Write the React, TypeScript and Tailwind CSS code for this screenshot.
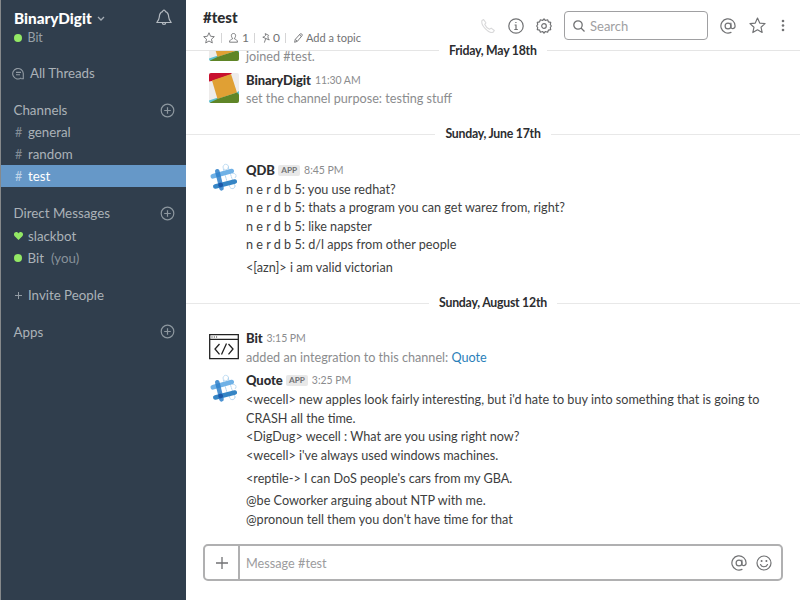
import React from 'react';

const PlusCircle = () => (
  <svg className="h-[15px] w-[15px]" viewBox="0 0 15 15" fill="none" stroke="#8d979f" strokeWidth="1.2">
    <circle cx="7.5" cy="7.5" r="6.3" />
    <path d="M7.5 4.2v6.6M4.2 7.5h6.6" />
  </svg>
);

const SectionTitle = ({ label }: { label: string }) => (
  <div className="flex h-[22px] items-center justify-between pl-[12.500px] pr-[11px]">
    <span className="pt-px text-[13.350px]">{label}</span>
    <PlusCircle />
  </div>
);

const Channel = ({ name, active }: { name: string; active?: boolean }) => (
  <div
    className={
      active
        ? 'flex h-[22px] items-center bg-[#6698c8] pl-[14px] pt-[2px] text-white'
        : 'flex h-[22px] items-center pl-[14px] pt-[2px]'
    }
  >
    <span className={active ? 'w-[13px] text-[12.500px] text-[#c0d5e9]' : 'w-[13px] text-[12.500px] text-[#838d96]'}>#</span>
    <span>{name}</span>
  </div>
);

const Sidebar = () => (
  <aside className="flex h-[600px] w-[186px] shrink-0 flex-col border-l border-[#86898b] bg-[#303e4d] text-[13.3px] text-[#abb2b8]">
    <div className="flex h-[28px] items-end justify-between pl-[13px] pr-[14px]">
      <div className="flex h-[20px] items-center">
        <span className="text-[15.3px] font-black text-white">BinaryDigit</span>
        <svg className="ml-[5px] mt-[1px] h-[6px] w-[8px]" viewBox="0 0 8 6" fill="none" stroke="#a4acb4" strokeWidth="1.3">
          <path d="M1 1l3 3 3-3" />
        </svg>
      </div>
      <svg className="mb-[1px] h-[18px] w-[16px]" viewBox="0 0 16 18" fill="none" stroke="#b3bac0" strokeWidth="1.2" strokeLinejoin="round" strokeLinecap="round">
        <path d="M6.6 2.6a1.4 1.4 0 1 1 2.8 0C12 3.4 12.6 5.6 12.7 8c.1 2.500 .9 3.500 2.500 5.500H.8C2.400 11.500 3.200 10.500 3.300 8c.1-2.400.7-4.600 3.300-5.400zM6.300 13.700a1.700 1.700 0 0 0 3.400 0" />
      </svg>
    </div>
    <div className="flex h-[20px] items-center pl-[13px] text-[12.4px] text-[#98a1a9]">
      <span className="mr-[5.500px] h-[8px] w-[8px] rounded-full bg-[#93e865]" />
      Bit
    </div>
    <div className="mt-[14px] flex h-[22px] items-center pl-[11px]">
      <svg className="mr-[5px] h-[13px] w-[13px]" viewBox="0 0 13 13" fill="none" stroke="#929ba3" strokeWidth="1.1">
        <path d="M9.300 10.900a5.300 5.300 0 1 1 2-4.400v5.300H9.300M4 5.400h5M4 7.800h4" />
      </svg>
      <span className="pt-[2px]">All Threads</span>
    </div>
    <div className="mt-[15px]">
      <SectionTitle label="Channels" />
      <Channel name="general" />
      <Channel name="random" />
      <Channel name="test" active />
    </div>
    <div className="mt-[15px]">
      <SectionTitle label="Direct Messages" />
      <div className="mt-[1px] flex h-[22px] items-center pl-[13px]">
        <svg className="mr-[5px] h-[8px] w-[9px]" viewBox="0 0 9 8" fill="#93e865">
          <path d="M4.500 8L.7 4.200C-.9 2.300.4 0 2.300 0c1 0 1.800.6 2.200 1.400C4.900.6 5.700 0 6.700 0c1.900 0 3.200 2.300 1.600 4.200z" />
        </svg>
        <span className="pt-px">slackbot</span>
      </div>
      <div className="flex h-[22px] items-center pl-[13px]">
        <span className="mr-[5.500px] h-[8px] w-[8px] rounded-full bg-[#93e865]" />
        <span className="pt-px">Bit</span>
        <span className="ml-[7px] pt-px text-[#88929b]">(you)</span>
      </div>
    </div>
    <div className="mt-[15px] flex h-[22px] items-center pl-[14px]">
      <svg className="mr-[6px] h-[7px] w-[7px]" viewBox="0 0 7 7" stroke="#929ba3" strokeWidth="1">
        <path d="M3.500 0v7M0 3.500h7" />
      </svg>
      <span className="pt-[1px]">Invite People</span>
    </div>
    <div className="mt-[14.500px]">
      <SectionTitle label="Apps" />
    </div>
  </aside>
);

const AtIcon = ({ className }: { className: string }) => (
  <svg className={className} viewBox="0 0 16 16" fill="none" stroke="#717274" strokeWidth="1.200" strokeLinecap="round">
    <circle cx="8" cy="8" r="2.900" />
    <path d="M10.900 5.200v3.700c0 2.400 4.200 2.300 4.200-.9A7.100 7.100 0 1 0 11 14.400" />
  </svg>
);

const STAR = 'M8 1l2.100 4.700 5 .5-3.800 3.400 1.100 5L8 12l-4.400 2.600 1.100-5L.9 6.200l5-.5z';

const Header = () => (
  <header className="relative z-10 flex h-[51px] shrink-0 justify-between border-b border-[#e5e5e5] bg-white pl-[17px] pr-[15px]">
    <div className="flex flex-col pt-[7px]">
      <div className="h-[20px] text-[15px] font-black leading-[20px] text-[#2c2d30]">#test</div>
      <div className="mt-[1px] flex h-[20px] items-center text-[12px] text-[#717274]">
        <svg className="h-[12px] w-[12px]" viewBox="0 0 16 16" fill="none" stroke="#717274" strokeWidth="1.200" strokeLinejoin="round">
          <path d={STAR} />
        </svg>
        <span className="ml-[6px] h-[10px] w-px bg-[#d5d5d6]" />
        <svg className="ml-[7px] h-[10px] w-[9px]" viewBox="0 0 9 10" fill="none" stroke="#717274" strokeWidth="0.900">
          <path d="M4.500.5c3 0 2.300 3.600 1 4.600v.8c1 .5 3 .8 3 3.300h-8c0-2.500 2-2.800 3-3.300v-.8c-1.300-1-2-4.600 1-4.600z" />
        </svg>
        <span className="ml-[4px] w-[6px]">1</span>
        <span className="ml-[6px] h-[10px] w-px bg-[#d5d5d6]" />
        <svg className="ml-[7px] h-[10px] w-[8px]" viewBox="0 0 8 10" fill="none" stroke="#717274" strokeWidth="0.900" strokeLinejoin="round">
          <path d="M3.200.6l3.500 1.800-.8 1.100.4 2.100 1 1.400L.8 4.200l1.600-.6 1.200-1.300zM3.600 5.800L2.400 9.600" />
        </svg>
        <span className="ml-[3px] w-[6px]">0</span>
        <span className="ml-[6px] h-[10px] w-px bg-[#d5d5d6]" />
        <svg className="ml-[8px] h-[10px] w-[9px]" viewBox="0 0 9 10" fill="none" stroke="#717274" strokeWidth="0.900" strokeLinejoin="round">
          <path d="M.6 9.300l.7-3L6.200.9c1-.7 2.600.6 1.900 1.700L3.400 8.300zM5.500 1.800l1.800 1.600M1.500 6.500l1.700 1.600" />
        </svg>
        <span className="ml-[3px] text-[11px]">Add a topic</span>
      </div>
    </div>
    <div className="flex h-[51px] items-center text-[#717274]">
      <svg className="mr-[13px] h-[14px] w-[14px]" viewBox="0 0 14 14" fill="none" stroke="#d9d9da" strokeWidth="1.100" strokeLinejoin="round">
        <path d="M1 1.500L2.600.6l2.300 3.200-1.200 1.500c.8 2 2.700 4 4.800 5l1.700-1.200 3.100 2.400-.9 1.600C8 15.500-.5 6 1 1.500z" />
      </svg>
      <svg className="mr-[12px] h-[16px] w-[16px]" viewBox="0 0 16 16" fill="none" stroke="currentColor" strokeWidth="1.200">
        <circle cx="8" cy="8" r="7.200" />
        <path d="M6.600 7H8v4.500M6.300 11.500h3.500M7.300 4.500h1.200" />
      </svg>
      <svg className="mr-[12px] h-[16px] w-[16px]" viewBox="0 0 16 16" fill="none" stroke="currentColor" strokeWidth="1.200" strokeLinejoin="round">
        <path d="M6.600 2.500L8 .8l1.400 1.700 2.200-.7.800 2 2.300.6-.4 2.100L15.300 8l-1 1.500.4 2.100-2.300.600-.8 2-2.200-.7L8 15.200l-1.400-1.700-2.200.7-.8-2-2.300-.6.400-2.100L.7 8l1-1.500-.4-2.100 2.300-.6.800-2z" />
        <circle cx="8" cy="8" r="2.300" />
      </svg>
      <div className="mr-[12px] flex h-[29px] w-[144px] items-center rounded-[4px] border border-[#a0a0a2] pl-[8px] text-[13px] text-[#a0a0a2]">
        <svg className="mr-[5px] h-[12px] w-[12px]" viewBox="0 0 12 12" fill="none" stroke="#717274" strokeWidth="1.300">
          <circle cx="5" cy="5" r="4.200" />
          <path d="M8 8l3.500 3.500" />
        </svg>
        <span className="pt-[2px]">Search</span>
      </div>
      <AtIcon className="mr-[13px] h-[16px] w-[16px]" />
      <svg className="mr-[15px] h-[17px] w-[17px]" viewBox="0 0 16 16" fill="none" stroke="currentColor" strokeWidth="1.100" strokeLinejoin="round">
        <path d={STAR} />
      </svg>
      <svg className="h-[13px] w-[4px]" viewBox="0 0 4 13" fill="currentColor">
        <circle cx="2" cy="2" r="1.300" />
        <circle cx="2" cy="6.500" r="1.300" />
        <circle cx="2" cy="11" r="1.300" />
      </svg>
    </div>
  </header>
);

const PaintAvatar = () => (
  <svg className="h-[30px] w-[30px] rounded-[2px]" viewBox="0 0 30 30">
    <path fill="#eeeceb" d="M0 0h30v30H0z" />
    <path fill="#c8102e" d="M0 0h23L21 2 3 8 0 8.500z" />
    <path fill="#5cc0cf" d="M0 27.500l9-3 0 5.500H0zM26 20.500l4-2.500v6z" />
    <path fill="#e0a034" d="M3 7.500L22 1l6 18.500-19.500 6.500z" />
    <path fill="#5f8527" d="M1 29.500l8.500-4L28 19.500l2 2V30H1z" />
  </svg>
);

const HashAvatar = () => (
  <svg className="h-[30px] w-[30px]" viewBox="1.200 0 30 30" fill="none" strokeLinecap="round">
    <g stroke="#a5cdec" strokeWidth="0.800" strokeDasharray="1.500 1">
      <circle cx="18" cy="4" r="2.700" />
      <path d="M15.500 6l4.500 15M20.500 4.500l5 15" />
      <circle cx="24.500" cy="23" r="2.700" />
      <path d="M25 10.500c3-.5 4.500 2.500 2 4.500" />
    </g>
    <path stroke="#6fb1e6" strokeWidth="4.600" d="M5 13.300L24 8" />
    <path stroke="#3585c5" strokeWidth="4.600" d="M7.500 23.500L27 18.500" />
    <path stroke="#2d7fc9" strokeOpacity="0.850" strokeWidth="4.600" d="M9.500 8.300l4.200 17" />
    <path stroke="#1c58a8" strokeWidth="4.400" d="M12.600 22l.5-.1" />
  </svg>
);

const CodeAvatar = () => (
  <svg className="h-[30px] w-[30px]" viewBox="0 0 30 30" fill="none" stroke="#222" strokeWidth="1.300">
    <path d="M.7 2.700h28.600v24H.7zM.7 7.300h28.600" />
    <path strokeDasharray="1 1.300" strokeWidth="1" d="M2.500 5h6" />
    <path d="M10.500 12L6 17l4.500 5.300M19.500 12l4.500 5-4.500 5.300M17.500 11.500l-5 11" />
  </svg>
);

type MessageProps = {
  avatar: React.ReactNode;
  name?: string;
  app?: boolean;
  time?: string;
  children: React.ReactNode;
};

const Message = ({ avatar, name, app, time, children }: MessageProps) => (
  <div className="flex pl-[23px]">
    <div className="mr-[7px] h-[30px] w-[30px] shrink-0 pt-[2px]">{avatar}</div>
    <div className="leading-[18.600px]">
      <div className="flex h-[19.400px] items-center whitespace-pre pb-[1.400px]">
        <span className="text-[13px] font-black tracking-[-0.100px] text-[#2c2d30]">{name}</span>
        {app && (
          <span className="ml-[3.500px] flex h-[11px] items-center rounded-[2px] bg-[#e8e8e8] px-[3px] text-[8.200px] font-bold text-[#717274]">
            APP
          </span>
        )}
        <span className="ml-[4px] text-[10.500px] tracking-[-0.060px] text-[#8b8c8e]">{time}</span>
      </div>
      {children}
    </div>
  </div>
);

const Divider = ({ label }: { label: string }) => (
  <div className="flex h-[20px] items-center text-[12.300px] font-bold tracking-[-0.250px] text-[#2c2d30]">
    <span className="h-px flex-1 bg-[#e8e8e8]" />
    <span className="px-[10px]">{label}</span>
    <span className="h-px flex-1 bg-[#e8e8e8]" />
  </div>
);

const Composer = () => (
  <div className="absolute bottom-[19px] left-[17px] flex h-[37px] w-[580px] items-center rounded-[5px] border-2 border-[#b0b0b1] bg-white pr-[9px]">
    <div className="flex h-full w-[35px] items-center justify-center border-r-2 border-[#b0b0b1]">
      <svg className="h-[12px] w-[12px]" viewBox="0 0 12 12" stroke="#717274" strokeWidth="1.300">
        <path d="M6 0v12M0 6h12" />
      </svg>
    </div>
    <span className="ml-[6px] flex-1 pt-[2px] text-[12.700px] text-[#9c9c9e]">Message #test</span>
    <AtIcon className="mr-[9.500px] h-[16px] w-[16px]" />
    <svg className="h-[16px] w-[16px]" viewBox="0 0 16 16" fill="none" stroke="#717274" strokeWidth="1.200" strokeLinecap="round">
      <circle cx="8" cy="8" r="7" />
      <path d="M4.500 9.500c1.200 3 5.800 3 7 0" />
      <path strokeWidth="2" d="M5.600 6v.1M10.400 6v.1" />
    </svg>
  </div>
);

export default function App() {
  return (
    <div className="flex h-[600px] w-[800px] overflow-hidden bg-white font-['Lato',sans-serif]">
      <Sidebar />
      <main className="relative flex h-[600px] w-[614px] flex-col">
        <Header />
        <div className="absolute left-[253px] top-[41px] z-20 h-[20px] bg-white px-[10px] text-[12.300px] font-bold leading-[20px] tracking-[-0.250px] text-[#2c2d30]">
          Friday, May 18th
        </div>
        <div className="-mt-[22.500px] flex flex-col text-[12.650px] text-[#3d3e40]">
          <Message avatar={<PaintAvatar />}>
            <div className="text-[#8b8c8e]">joined #test.</div>
          </Message>
          <div className="mt-[4.500px]">
            <Message avatar={<PaintAvatar />} name="BinaryDigit" time="11:30 AM">
              <div className="text-[#8b8c8e]">set the channel purpose: testing stuff</div>
            </Message>
          </div>
          <div className="mb-[17px] mt-[15.200px]">
            <Divider label="Sunday, June 17th" />
          </div>
          <Message avatar={<HashAvatar />} name="QDB" app time="8:45 PM">
            <div>n e r d b 5: you use redhat?</div>
            <div>n e r d b 5: thats a program you can get warez from, right?</div>
            <div>n e r d b 5: like napster</div>
            <div>n e r d b 5: d/l apps from other people</div>
            <div className="mt-[4.200px]">&lt;[azn]&gt; i am valid victorian</div>
          </Message>
          <div className="mb-[16.500px] mt-[15.300px]">
            <Divider label="Sunday, August 12th" />
          </div>
          <Message avatar={<CodeAvatar />} name="Bit" time="3:15 PM">
            <div className="text-[#8b8c8e]">
              added an integration to this channel: <span className="text-[#2a80b9]">Quote</span>
            </div>
          </Message>
          <div className="mt-[4.200px]">
            <Message avatar={<HashAvatar />} name="Quote" app time="3:25 PM">
              <div>&lt;wecell&gt; new apples look fairly interesting, but i'd hate to buy into something that is going to</div>
              <div>CRASH all the time.</div>
              <div>&lt;DigDug&gt; wecell : What are you using right now?</div>
              <div>&lt;wecell&gt; i've always used windows machines.</div>
              <div className="mt-[4.200px]">&lt;reptile-&gt; I can DoS people's cars from my GBA.</div>
              <div className="mt-[4.200px]">@be Coworker arguing about NTP with me.</div>
              <div>@pronoun tell them you don't have time for that</div>
            </Message>
          </div>
        </div>
        <Composer />
      </main>
    </div>
  );
}
